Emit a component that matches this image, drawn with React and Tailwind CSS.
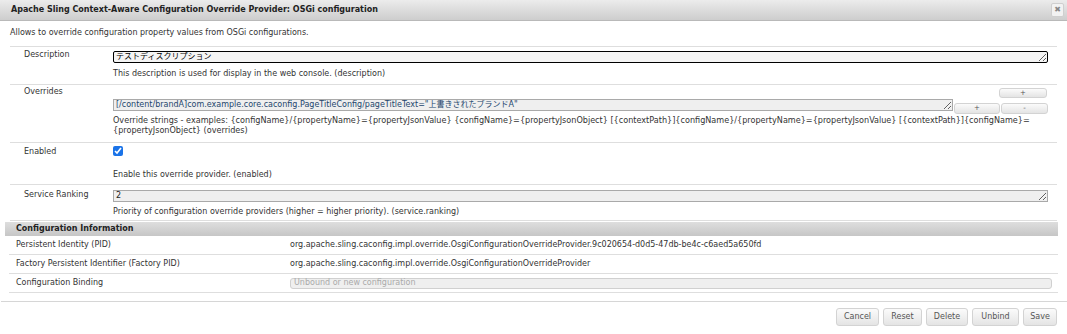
const Btn = ({ children, className = "" }) => {
  return (
    <button
      type="button"
      className={`flex items-center justify-center border border-[#d3d3d3] rounded-[3px] bg-gradient-to-b from-[#fbfbfb] to-[#e4e4e4] text-[#555] leading-none ${className}`}
    >
      {children}
    </button>
  );
};

const Row = ({ label, children, className = "" }) => {
  return (
    <div className={`flex border-b border-[#dedede] ${className}`}>
      <div className="w-[103px] pl-[14px] shrink-0 leading-[10px] text-[#333]">{label}</div>
      <div className="flex-1 flex flex-col pr-[9px]">{children}</div>
    </div>
  );
};

const Help = ({ children, className = "" }) => {
  return <p className={`leading-[10px] text-[#333] ${className}`}>{children}</p>;
};

const App = () => {
  return (
    <div className="w-[1067px] h-[334px] overflow-hidden bg-white font-['DejaVu_Sans',Verdana,sans-serif] text-[8px] text-[#333]">
      {/* title bar */}
      <div className="h-[21px] flex items-center justify-between pl-[11px] pr-[3px] bg-gradient-to-b from-[#ececec] to-[#cdcdcd] border-b border-[#b9b9b9]">
        <span className="font-bold text-[#222]">
          Apache Sling Context-Aware Configuration Override Provider: OSGi configuration
        </span>
        <span className="w-[13px] h-[14px] flex items-center justify-center border border-[#cfcfcf] rounded-[2px] bg-[#f2f2f2] text-[#888] text-[8px] font-bold">
          ✖
        </span>
      </div>

      <div className="px-[10px]">
        <p className="pt-[7px] pb-[8px] leading-[10px] border-b border-[#dedede]">
          Allows to override configuration property values from OSGi configurations.
        </p>

        <Row label="Description" className="pt-[3px] pb-[5px]">
          <textarea
            rows={1}
            defaultValue="テストディスクリプション"
            className="mt-[1px] h-[12px] w-full px-[2px] py-0 leading-[10px] text-black bg-[#f4f4f4] border-[1.5px] border-black rounded-[2px] overflow-hidden font-['DejaVu_Sans','Noto_Sans_CJK_JP',sans-serif] text-[8px]"
          />
          <Help className="mt-[6px]">
            This description is used for display in the web console. (description)
          </Help>
        </Row>

        <Row label="Overrides" className="pt-[2px] pb-[7px]">
          <Btn className="mt-[1px] self-end mr-[1px] w-[48px] h-[10px] text-[7px]">+</Btn>
          <div className="flex items-start mt-[1px]">
            <textarea
              rows={1}
              defaultValue={'[/content/brandA]com.example.core.caconfig.PageTitleConfig/pageTitleText="上書きされたブランドA"'}
              className="flex-1 h-[12px] px-[2px] py-0 leading-[10px] text-[#24466d] bg-[#efefef] border border-[#a9a9a9] overflow-hidden font-['DejaVu_Sans','Noto_Sans_CJK_JP',sans-serif] text-[8px]"
            />
            <Btn className="mt-[4px] ml-[1px] w-[46px] h-[11px] text-[7px]">+</Btn>
            <Btn className="mt-[4px] ml-[1px] w-[47px] h-[11px] text-[7px]">-</Btn>
          </div>
          <Help className="mt-[1px] text-[8.1px]">
            Override strings - examples: {"{configName}/{propertyName}={propertyJsonValue} {configName}={propertyJsonObject} [{contextPath}]{configName}/{propertyName}={propertyJsonValue} [{contextPath}]{configName}="}
            <br />
            {"{propertyJsonObject}"} (overrides)
          </Help>
        </Row>

        <Row label="Enabled" className="pt-[4px] pb-[4px]">
          <input
            type="checkbox"
            defaultChecked
            className="-mt-[1px] w-[10px] h-[10px] m-0 accent-[#1a73e8]"
          />
          <Help className="mt-[14px]">Enable this override provider. (enabled)</Help>
        </Row>

        <Row label="Service Ranking" className="pt-[5px] pb-[3px]">
          <textarea
            rows={1}
            defaultValue="2"
            className="h-[12px] w-full px-[2px] py-0 leading-[10px] text-[#222] bg-[#efefef] border border-[#a9a9a9] overflow-hidden text-[8px]"
          />
          <Help className="mt-[5px]">
            Priority of configuration override providers (higher = higher priority). (service.ranking)
          </Help>
        </Row>
      </div>

      {/* configuration information */}
      <div className="pl-[5px] pr-[9px] mt-[1px]">
        <div className="h-[14px] flex items-center pl-[11px] bg-gradient-to-b from-[#dedede] to-[#c6c6c6] font-bold text-[#222]">
          Configuration Information
        </div>
        <div className="ml-[4px]">
          <div className="h-[19px] flex items-center border-b border-[#dedede]">
            <span className="w-[281px] pl-[7px] shrink-0">Persistent Identity (PID)</span>
            <span>org.apache.sling.caconfig.impl.override.OsgiConfigurationOverrideProvider.9c020654-d0d5-47db-be4c-c6aed5a650fd</span>
          </div>
          <div className="h-[19px] flex items-center border-b border-[#dedede]">
            <span className="w-[281px] pl-[7px] shrink-0">Factory Persistent Identifier (Factory PID)</span>
            <span>org.apache.sling.caconfig.impl.override.OsgiConfigurationOverrideProvider</span>
          </div>
          <div className="h-[19px] flex items-center border-b border-[#dedede]">
            <span className="w-[281px] pl-[7px] shrink-0">Configuration Binding</span>
            <div className="flex-1 mr-[6px] h-[11px] flex items-center px-[3px] bg-[#efefef] border border-[#d0d0d0] rounded-[3px] text-[#aaa]">
              Unbound or new configuration
            </div>
          </div>
        </div>
      </div>

      {/* button pane */}
      <div className="mt-[8px] ml-[1px] border-t border-[#d6d6d6] flex justify-end gap-[4px] pr-[10px] pt-[6px]">
        <Btn className="w-[43px] h-[18px] text-[8px]">Cancel</Btn>
        <Btn className="w-[39px] h-[18px] text-[8px]">Reset</Btn>
        <Btn className="w-[42px] h-[18px] text-[8px]">Delete</Btn>
        <Btn className="w-[47px] h-[18px] text-[8px]">Unbind</Btn>
        <Btn className="w-[34px] h-[18px] text-[8px]">Save</Btn>
      </div>
    </div>
  );
};

export default App;
